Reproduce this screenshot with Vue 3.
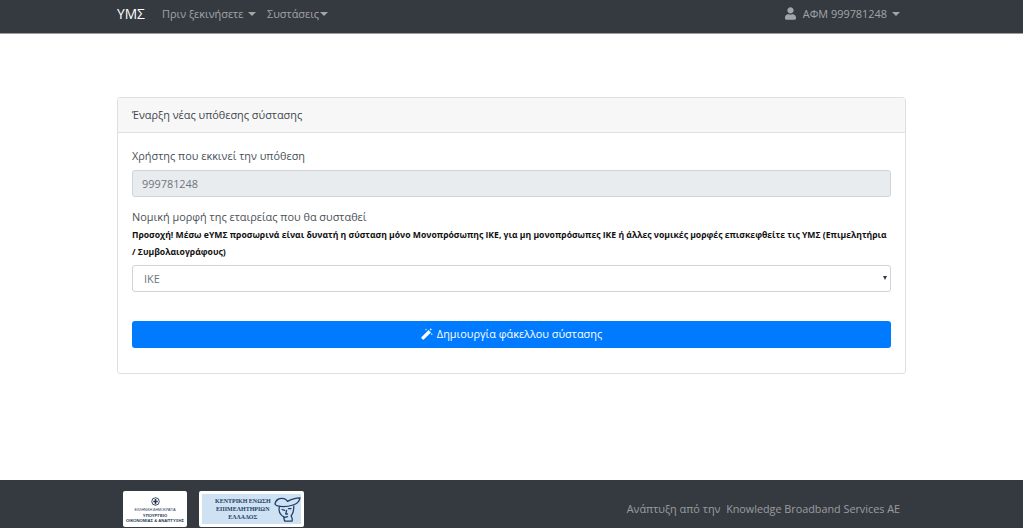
<template>
  <div class="page">
    <nav class="navbar">
      <div class="nav-left">
        <span class="brand">ΥΜΣ</span>
        <a class="nav-link first">Πριν ξεκινήσετε <i class="caret"></i></a>
        <a class="nav-link second">Συστάσεις<i class="caret tight"></i></a>
      </div>
      <a class="nav-link user">
        <svg class="user-icon" viewBox="0 0 448 512" width="11" height="13"><path fill="currentColor" d="M224 256c70.700 0 128-57.300 128-128S294.700 0 224 0 96 57.300 96 128s57.300 128 128 128zm89.600 32h-16.700c-22.200 10.200-46.900 16-72.900 16s-50.600-5.800-72.900-16h-16.700C60.200 288 0 348.200 0 422.400V464c0 26.500 21.500 48 48 48h352c26.500 0 48-21.500 48-48v-41.600c0-74.200-60.200-134.400-134.400-134.400z"/></svg>
        <span>ΑΦΜ 999781248</span>
        <i class="caret"></i>
      </a>
    </nav>

    <main class="main">
      <section class="card">
        <header class="card-header">Έναρξη νέας υπόθεσης σύστασης</header>
        <div class="card-body">
          <label class="label">Χρήστης που εκκινεί την υπόθεση</label>
          <input class="control readonly" value="999781248" readonly />
          <label class="label second-label">Νομική μορφή της εταιρείας που θα συσταθεί</label>
          <p class="note">Προσοχή! Μέσω eΥΜΣ προσωρινά είναι δυνατή η σύσταση μόνο Μονοπρόσωπης ΙΚΕ, για μη μονοπρόσωπες ΙΚΕ ή άλλες νομικές μορφές επισκεφθείτε τις ΥΜΣ (Επιμελητήρια<br />/ Συμβολαιογράφους)</p>
          <div class="select-wrap">
            <select class="control select"><option>ΙΚΕ</option></select>
            <i class="select-arrow"></i>
          </div>
          <button class="btn">
            <svg viewBox="0 0 12 12" width="12" height="12"><path fill="#fff" d="M.4 9.200 7.600 2l2.400 2.400-7.200 7.200a.7.7 0 0 1-1 0L.4 10.200a.7.7 0 0 1 0-1z"/><path fill="#fff" d="M9.800 0l.4 1 1 .4-1 .4-.4 1-.4-1-1-.4 1-.4zM5 .6l.3.8.8.3-.8.3-.3.8-.3-.8-.8-.3.8-.3zM10.800 5l.3.8.8.3-.8.3-.3.8-.3-.8-.8-.3.8-.3z"/></svg>
            <span>Δημιουργία φάκελλου σύστασης</span>
          </button>
        </div>
      </section>
    </main>

    <footer class="footer">
      <div class="logos">
        <div class="logo logo-min">
          <svg viewBox="0 0 12 12" width="9" height="9"><circle cx="6" cy="6" r="5" fill="none" stroke="#23364f" stroke-width="1.200"/><path fill="#23364f" d="M5 2.500h2v2.500h2v2H7v2.500H5V7H3V5h2z"/></svg>
          <span class="m1">ΕΛΛΗΝΙΚΗ ΔΗΜΟΚΡΑΤΙΑ</span>
          <span class="m2">ΥΠΟΥΡΓΕΙΟ</span>
          <span class="m2">ΟΙΚΟΝΟΜΙΑΣ &amp; ΑΝΑΠΤΥΞΗΣ</span>
        </div>
        <div class="logo logo-cci">
          <div class="cci-inner">
            <div class="cci-text">
              <span>ΚΕΝΤΡΙΚΗ ΕΝΩΣΗ</span>
              <span>ΕΠΙΜΕΛΗΤΗΡΙΩΝ</span>
              <span>ΕΛΛΑΔΟΣ</span>
            </div>
            <svg viewBox="0 0 30 30" width="27" height="27"><g fill="none" stroke="#1f3f66" stroke-width="1.400" stroke-linejoin="round" stroke-linecap="round"><path d="M1 9c1-5 5-7 10-6 2 .5 3 1.500 4 3 5-3 9-4 14-4-1 4-4 7-8 8-6 2-13 2-17 1-1 0-2-1-3-2z"/><path d="M6 12c-1 4 0 7 2 9 1 1 2 2 3 2 0 3 0 4 1 5h8c1-2 0-4-1-6 2-2 3-6 3-11"/><path d="M9 15l3 1M16 14h3M14 16l-1 4h2M11 24l4-1"/></g></svg>
          </div>
        </div>
      </div>
      <div class="credit">Ανάπτυξη από την&nbsp; <span class="company">Knowledge Broadband Services ΑΕ</span></div>
    </footer>
  </div>
</template>

<script setup>
</script>

<style>
html, body { margin: 0; background: #fff; }
</style>

<style scoped>
.page {
  height: 528px;
  display: flex;
  flex-direction: column;
  font-family: "Open Sans", "Noto Sans", sans-serif;
  font-size: 10.900px;
  color: #495057;
  overflow: hidden;
}
.navbar {
  height: 34px;
  flex: none;
  box-sizing: border-box;
  background: #343a40;
  border-bottom: 1px solid #9a9c9e;
  display: flex;
  align-items: center;
  justify-content: space-between;
  padding: 0 123px 6px 117px;
  color: rgba(255,255,255,.55);
}
.nav-left { display: flex; align-items: center; }
.brand { color: #fff; font-size: 13.800px; font-weight: 500; width: 45px; }
.nav-link { display: inline-flex; align-items: center; }
.first { width: 105px; }
.caret {
  display: inline-block;
  margin-left: 5px;
  border-top: 4px solid currentColor;
  border-left: 4px solid transparent;
  border-right: 4px solid transparent;
}
.caret.tight { margin-left: 1px; }
.user-icon { margin-right: 7px; }
.main {
  flex: 1;
  padding: 63px 117px 0;
}
.card {
  box-sizing: border-box;
  width: 789px;
  height: 277px;
  border: 1px solid #dfdfdf;
  border-radius: 3px;
  background: #fff;
}
.card-header {
  height: 35px;
  box-sizing: border-box;
  background: #f7f7f7;
  border-bottom: 1px solid #dfdfdf;
  padding-left: 14px;
  line-height: 34px;
  color: #3f464c;
}
.card-body {
  padding: 14px 14px 0;
  display: flex;
  flex-direction: column;
}
.label { line-height: 17px; height: 17px; }
.control {
  box-sizing: border-box;
  width: 759px;
  height: 27px;
  border: 1px solid #ced4da;
  border-radius: 3px;
  font: inherit;
  color: #6c757d;
  background: #fff;
  outline: none;
}
.readonly { margin-top: 6px; padding: 0 9px; background: #e9ecef; }
.second-label { margin-top: 11px; }
.note {
  margin: 2px 0 4px;
  font-size: 8.650px;
  font-weight: 700;
  color: #111;
  line-height: 17px;
  white-space: nowrap;
}
.select-wrap { position: relative; height: 27px; }
.select { padding: 0 11px; appearance: none; display: block; }
.select-arrow {
  position: absolute;
  right: 4px;
  top: 11px;
  border-top: 4px solid #343a40;
  border-left: 2.500px solid transparent;
  border-right: 2.500px solid transparent;
}
.btn {
  margin-top: 29px;
  height: 27px;
  width: 759px;
  border: 0;
  border-radius: 3px;
  padding: 0 0 2px;
  background: #007bff;
  color: #fff;
  font: inherit;
  display: flex;
  align-items: center;
  justify-content: center;
  gap: 4px;
}
.footer {
  height: 48px;
  flex: none;
  background: #343a40;
  display: flex;
  justify-content: space-between;
  padding: 11px 123px 0;
  box-sizing: border-box;
}
.logos { display: flex; gap: 12px; }
.logo {
  box-sizing: border-box;
  height: 36px;
  background: #fff;
  border-radius: 2px;
  display: flex;
}
.logo-min {
  width: 64px;
  flex-direction: column;
  align-items: center;
  padding-top: 6px;
  color: #23364f;
  font-family: "Liberation Sans", sans-serif;
}
.m1 { font-size: 3.500px; line-height: 5px; margin-top: 2px; white-space: nowrap; }
.m2 { font-size: 4.200px; font-weight: 700; line-height: 5px; white-space: nowrap; }
.logo-cci { width: 105px; padding: 3px; }
.cci-inner {
  flex: 1;
  background: #cfe2f3;
  display: flex;
  align-items: center;
  padding-left: 13px;
  gap: 3px;
  color: #1f3f66;
}
.cci-text {
  display: flex;
  flex-direction: column;
  align-items: center;
  font-family: "Liberation Serif", serif;
  font-size: 6px;
  font-weight: 700;
  line-height: 8px;
  white-space: nowrap;
}
.credit {
  color: rgba(255,255,255,.5);
  line-height: 20px;
  margin-top: 8px;
}
.company { font-size: 10.800px; }
</style>
